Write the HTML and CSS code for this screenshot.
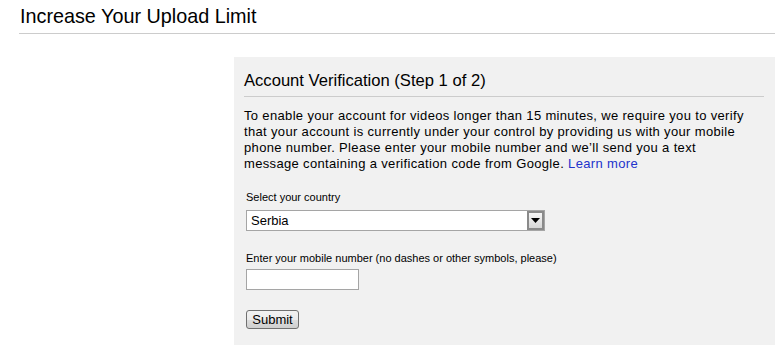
FILE: index.html
```html
<!DOCTYPE html>
<html>
<head>
    <title>Increase Your Upload Limit</title>
    <meta http-equiv="content-type" content="text/html; charset=UTF-8"/>
    <link rel="stylesheet" href="styles.css">
</head>
<body>
<div class="page_header">
    <h1>Increase Your Upload Limit</h1>
</div>
<div class="verify_box">
    <h2>Account Verification (Step 1 of 2)</h2>
    <p class="intro">To enable your account for videos longer than 15 minutes, we require you to verify<br>
        that your account is currently under your control by providing us with your mobile<br>
        phone number. Please enter your mobile number and we’ll send you a text<br>
        message containing a verification code from Google. <a href="#">Learn more</a></p>
    <form>
        <label class="field_label" for="country">Select your country</label>
        <div class="select_wrap">
            <select id="country">
                <option>Serbia</option>
            </select>
            <span class="select_arrow"><svg width="9" height="5" viewBox="0 0 9 5"><path d="M0 0h9L4.5 5z" fill="#000"/></svg></span>
        </div>
        <label class="field_label" for="mobile">Enter your mobile number (no dashes or other symbols, please)</label>
        <input id="mobile" class="mobile_input" type="text"/>
        <div class="submit_row">
            <button type="button" class="submit_button">Submit</button>
        </div>
    </form>
</div>
</body>
</html>
```

FILE: styles.css
```css
html {
    height: 100%;
}

body {
    margin: 0;
    background-color: #fff;
    color: #000;
    font-family: "Liberation Sans", Arial, sans-serif;
    overflow: hidden;
}

.page_header {
    margin-left: 19px;
    border-bottom: 1px solid #ccc;
    padding: 5px 0 6px 1px;
}

.page_header h1 {
    margin: 0;
    font-size: 19.8px;
    font-weight: normal;
    line-height: 22px;
}

.verify_box {
    margin: 23px 0 0 234px;
    padding: 14px 11px 20px 10px;
    background-color: #f1f1f1;
    min-height: 254px;
}

.verify_box h2 {
    margin: 0;
    font-size: 16.6px;
    font-weight: normal;
    line-height: 20px;
    padding-bottom: 5px;
    border-bottom: 1px solid #ccc;
}

.intro {
    margin: 11px 0 0 0;
    font-size: 13px;
    line-height: 16px;
    letter-spacing: 0.34px;
}

.intro a {
    color: #2233cc;
    text-decoration: none;
}

.field_label {
    display: block;
    font-size: 11px;
    line-height: 14px;
}

.verify_box form {
    margin-top: 18px;
    padding-left: 2px;
}

.select_wrap {
    position: relative;
    width: 299px;
    height: 21px;
    margin: 6px 0 20px 0;
}

.select_wrap select {
    appearance: none;
    -webkit-appearance: none;
    width: 100%;
    height: 21px;
    margin: 0;
    padding: 0 0 0 4px;
    border: 1px solid #a5a5a5;
    border-radius: 0;
    background: #fff;
    font-family: "Liberation Sans", Arial, sans-serif;
    font-size: 13px;
    color: #000;
}

/* drop-down button drawn over the right end of the select */
.select_arrow {
    position: absolute;
    top: 1px;
    right: 1px;
    bottom: 1px;
    width: 17px;
    box-sizing: border-box;
    border: 2px solid #8a8a8a;
    background: linear-gradient(#f6f6f6, #d6d6d6);
    display: flex;
    align-items: center;
    justify-content: center;
    pointer-events: none;
}

.mobile_input {
    display: block;
    box-sizing: border-box;
    width: 113px;
    height: 21px;
    margin: 4px 0 0 0;
    border: 1px solid #a5a5a5;
    background: #fff;
    padding: 0 3px;
}

.submit_row {
    margin-top: 20px;
}

.submit_button {
    box-sizing: border-box;
    height: 19px;
    width: 53px;
    padding: 0;
    margin: 0;
    border: 1px solid #707070;
    border-radius: 3px;
    background: linear-gradient(#f2f2f2 0%, #ebebeb 50%, #dddddd 51%, #cfcfcf 100%);
    font-family: "Liberation Sans", Arial, sans-serif;
    font-size: 13px;
    color: #000;
}
```
